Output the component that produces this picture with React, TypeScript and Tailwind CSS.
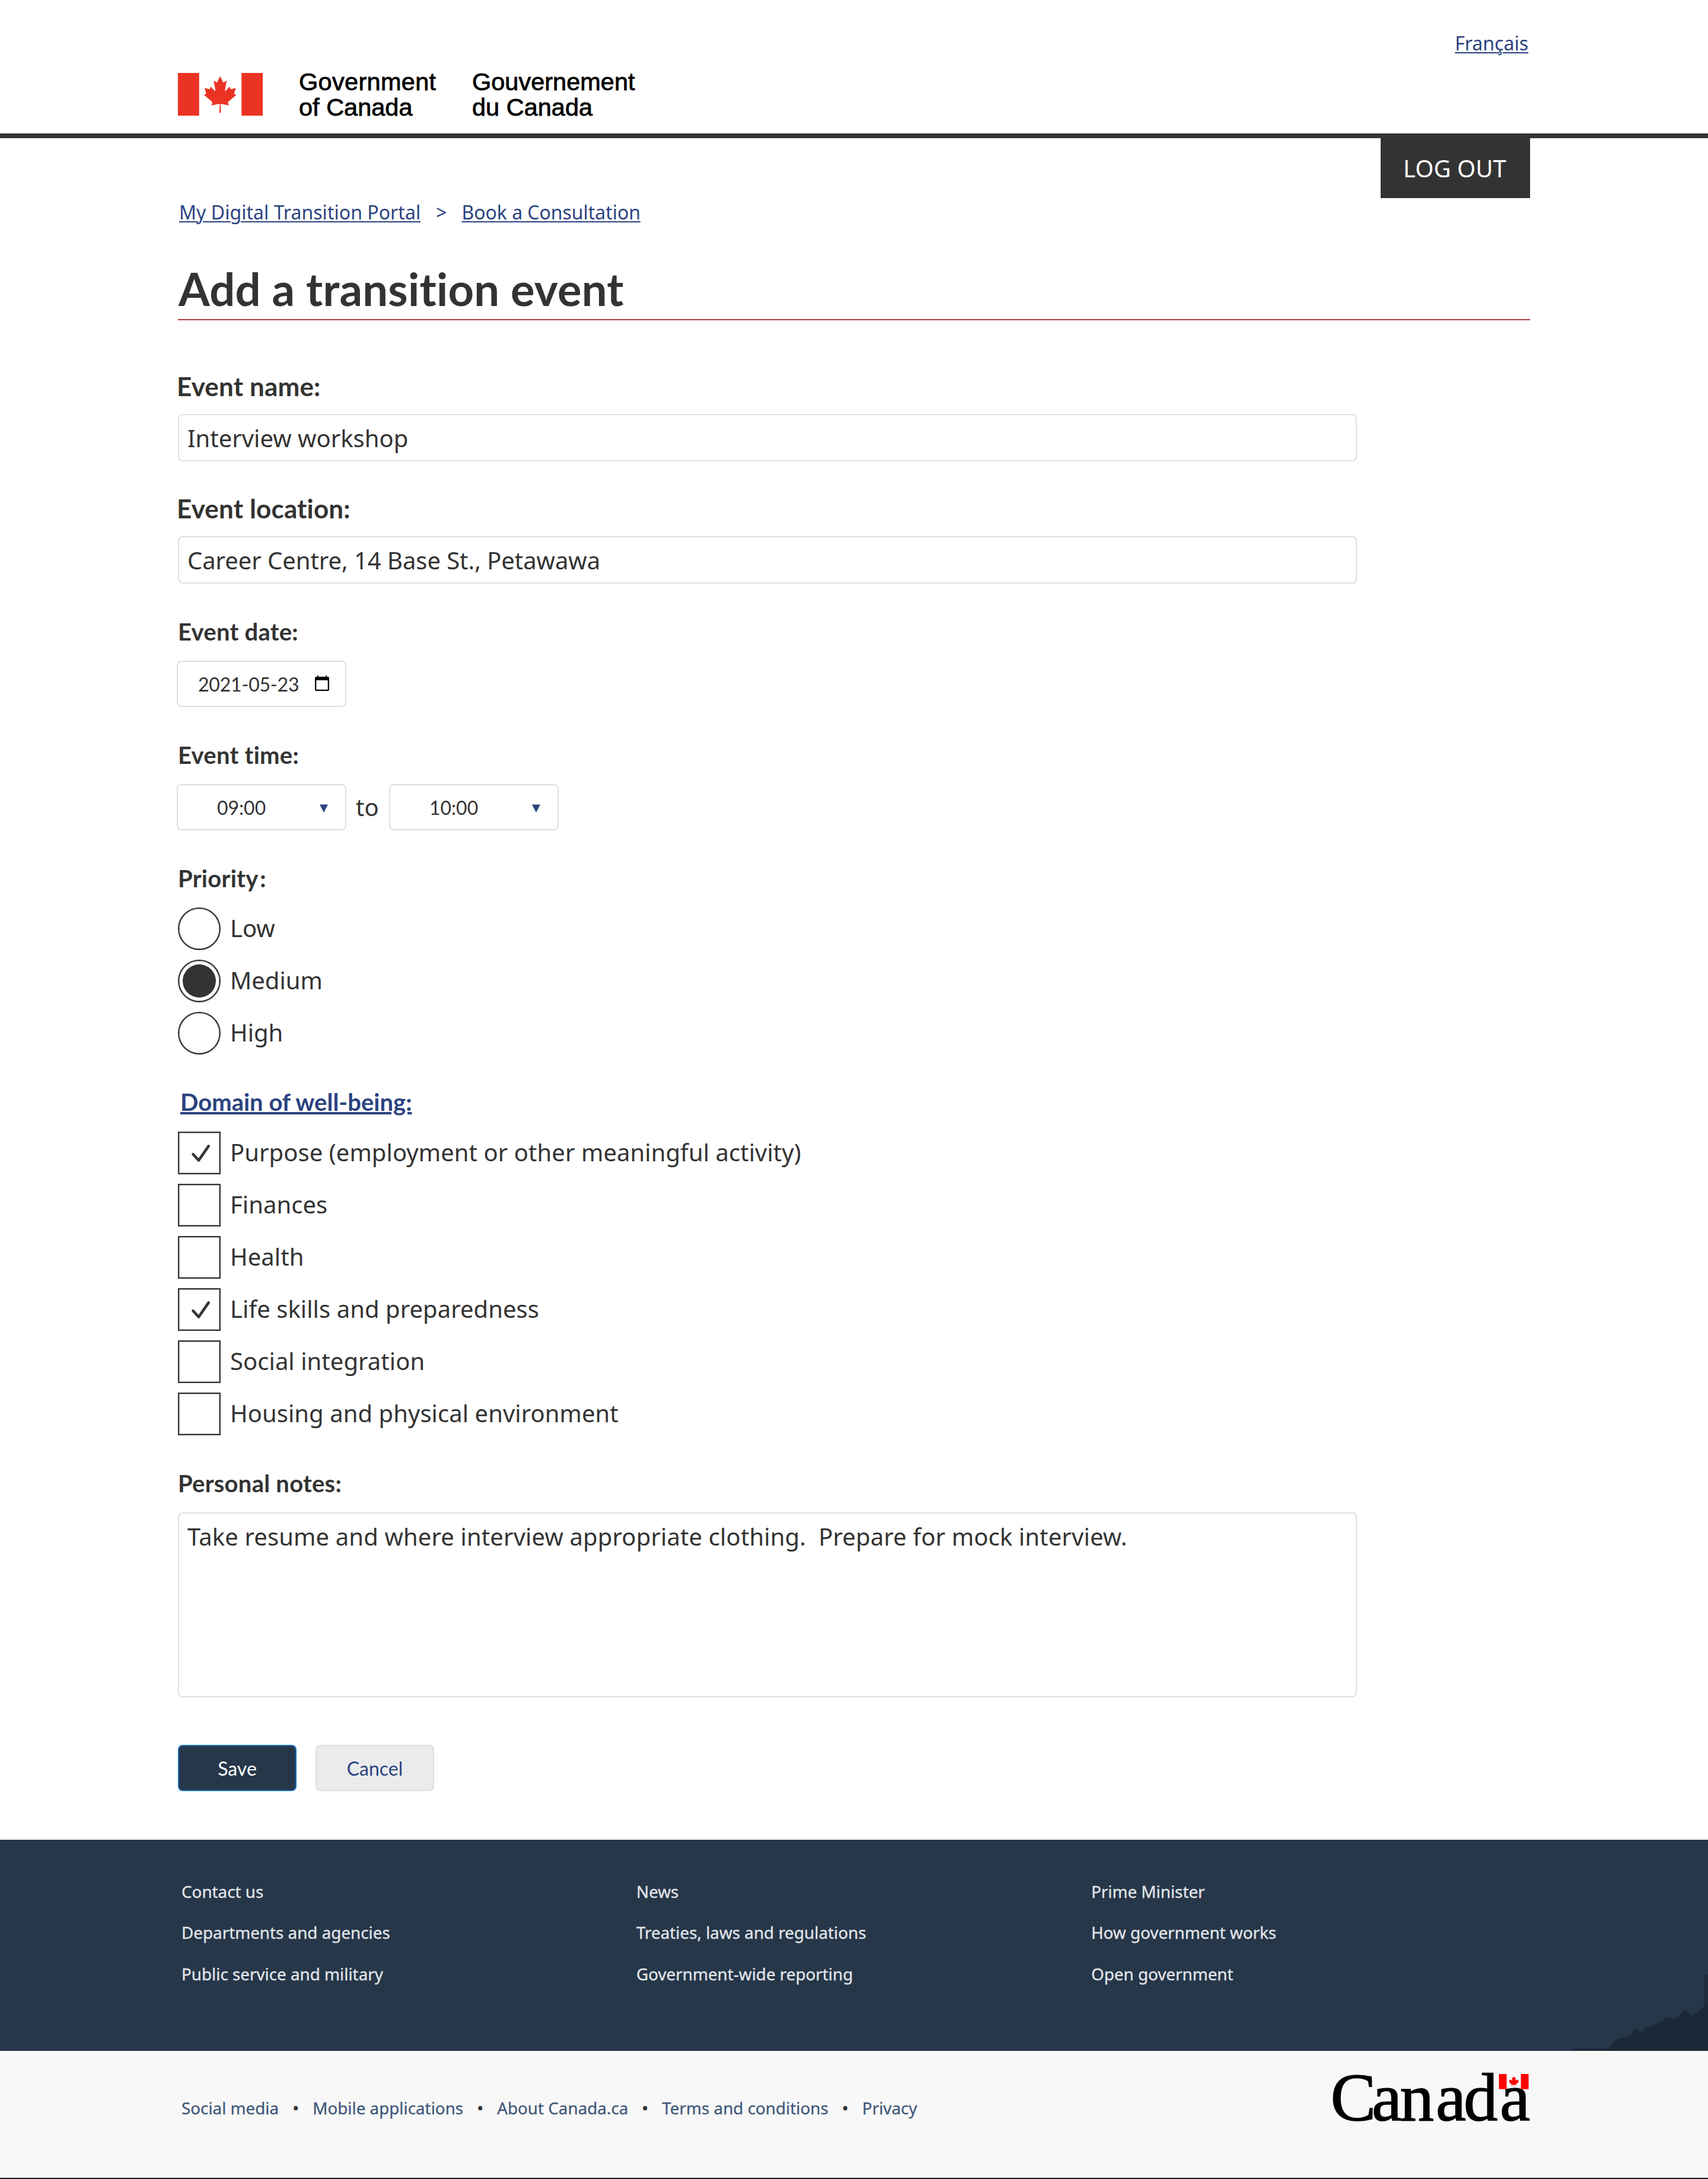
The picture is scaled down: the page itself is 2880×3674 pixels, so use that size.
import type { ReactNode } from "react";

const noto = "font-['Noto_Sans',sans-serif]";
const lato = "font-['Lato',sans-serif] [font-variant-ligatures:none]";

const LEAF =
  "m4890 4430-45-863a95 95 0 0 1 111-98l859 151-116-320a65 65 0 0 1 20-73l941-762-212-99a65 65 0 0 1-34-79l186-572-542 115a65 65 0 0 1-73-38l-105-247-423 454a65 65 0 0 1-111-57l204-1052-327 189a65 65 0 0 1-91-27l-332-652-332 652a65 65 0 0 1-91 27l-327-189 204 1052a65 65 0 0 1-111 57l-423-454-105 247a65 65 0 0 1-73 38l-542-115 186 572a65 65 0 0 1-34 79l-212 99 941 762a65 65 0 0 1 20 73l-116 320 859-151a95 95 0 0 1 111 98l-45 863z";

function Leaf(props: { x: number; y: number; width: number; height: number }) {
  return (
    <svg {...props} viewBox="2940 400 3720 4030" preserveAspectRatio="none">
      <path d={LEAF} />
    </svg>
  );
}

function Flag() {
  return (
    <svg className="h-[72px] w-[143px] shrink-0" viewBox="0 0 143 72" fill="#eb3323">
      <rect width="35.8" height="72" />
      <rect x="107.2" width="35.8" height="72" />
      <Leaf x={44} y={5.5} width={54.5} height={61.5} />
    </svg>
  );
}

function Wordmark() {
  return (
    <svg className="h-[140px] w-[348px] shrink-0" viewBox="-4 -26 348 140" role="img" aria-label="Canada">
      <text
        className="font-['Liberation_Serif',serif] text-[115px]"
        x="0.5 70 117.5 178 225 286"
        y="81"
        fill="#000"
        stroke="#000"
        strokeWidth="1.5"
      >
        Canada
      </text>
      <g fill="#ff0000">
        <rect x="284.5" y="3" width="13" height="25.5" />
        <rect x="321.5" y="3" width="13" height="25.5" />
        <Leaf x={301} y={6.5} width={17} height={19} />
      </g>
    </svg>
  );
}

function Label({ children, large }: { children: ReactNode; large?: boolean }) {
  return large ? (
    <div className={`${lato} -ml-[2px] text-[44px] leading-[52px] font-bold tracking-[0.15px]`}>{children}</div>
  ) : (
    <div className={`${lato} pt-[2px] text-[40px] leading-[46px] font-bold tracking-[0.25px]`}>{children}</div>
  );
}

function TextInput({ children }: { children: ReactNode }) {
  return (
    <div className="mt-[21px] flex h-20 w-[1988px] items-center rounded-lg border-2 border-[#dcdee1] pt-[2px] pl-[14px] text-[40px] leading-[54px]">
      {children}
    </div>
  );
}

function TimeSelect({ value }: { value: string }) {
  return (
    <div
      className={`${lato} flex h-[78px] w-[286px] items-center justify-between rounded-lg border-2 border-[#dcdee1] pr-[29px] pl-[66px] text-[32px] leading-[40px]`}
    >
      <span className="pt-[2px]">{value}</span>
      <svg className="mt-[4px] h-[14px] w-[14px]" viewBox="0 0 14 14">
        <path d="M0 .5h14L7 14z" fill="#2b4380" />
      </svg>
    </div>
  );
}

function Radio({ label, checked }: { label: string; checked?: boolean }) {
  return (
    <div className="flex h-[72px] items-center gap-4">
      <div className="flex size-[72px] items-center justify-center rounded-full border-[2px] border-[#333] shadow-[inset_0_0_0_0.5px_#333]">
        {checked && <div className="size-14 rounded-full bg-[#333]" />}
      </div>
      <span className="-mt-[2px] text-[40px] leading-[54px]">{label}</span>
    </div>
  );
}

function Checkbox({ label, checked }: { label: string; checked?: boolean }) {
  return (
    <div className="flex h-[72px] items-center gap-4">
      <div className="size-[72px] border-2 border-[#333] shadow-[inset_0_0_0_1px_#adadad]">
        {checked && (
          <svg className="size-[68px]" viewBox="2 2 68 68" fill="none" stroke="#333" strokeWidth="4.6" strokeLinecap="round" strokeLinejoin="round">
            <path d="M25.6 38.2 35 48.5 51.7 24.4" />
          </svg>
        )}
      </div>
      <span className="-mt-[2px] text-[40px] leading-[54px] tracking-[0.05px]">{label}</span>
    </div>
  );
}

const footerColumns = [
  ["Contact us", "Departments and agencies", "Public service and military"],
  ["News", "Treaties, laws and regulations", "Government-wide reporting"],
  ["Prime Minister", "How government works", "Open government"],
];

const footerLinks = ["Social media", "Mobile applications", "About Canada.ca", "Terms and conditions", "Privacy"];

const link = "text-[#2b4380] underline decoration-2 underline-offset-[3px]";

export default function App() {
  return (
    <div className={`${noto} flex h-[3674px] w-[2880px] flex-col bg-white text-[#333]`}>
      <header className="flex h-[233px] shrink-0 justify-between border-b-8 border-[#333] px-[300px]">
        <div className="flex pt-[123px]">
          <Flag />
          <div className="-mt-[6px] ml-[61px] flex font-['Liberation_Sans',sans-serif] text-[41.5px] leading-[42.5px] text-black [-webkit-text-stroke:0.8px_black]">
            <div className="w-[292px]">
              <span className="tracking-[0.3px]">Government</span>
              <br />
              of Canada
            </div>
            <div>
              Gouvernement
              <br />
              du Canada
            </div>
          </div>
        </div>
        <a className={`${link} mt-[53px] mr-[3px] h-10 text-[32px] leading-[40px]`}>Français</a>
      </header>

      <main className="flex flex-col px-[300px]">
        <button className="h-[101px] w-[252px] self-end bg-[#333] pt-[21px] pb-[20px] pl-[38px] text-left text-[40px] leading-[60px] text-white">
          LOG OUT
        </button>
        <nav className="mt-1 ml-[2px] flex gap-[26px] text-[32px] leading-[40px] text-[#2b4380]">
          <a className={`${link} tracking-[0.03px]`}>My Digital Transition Portal</a>
          <span>&gt;</span>
          <a className={`${link} -ml-px tracking-[-0.05px]`}>Book a Consultation</a>
        </nav>

        <h1 className={`${lato} mt-[63px] h-[99px] border-b-2 border-[#af3c43] pl-px text-[76px] leading-[92px] font-bold tracking-[0.2px]`}>
          Add a transition event
        </h1>

        <div className="mt-[85px]">
          <Label large>Event name:</Label>
          <TextInput>Interview workshop</TextInput>
        </div>
        <div className="mt-[53px]">
          <Label large>Event location:</Label>
          <TextInput>
            <span className="tracking-[-0.06px]">Career Centre, 14 Base St., Petawawa</span>
          </TextInput>
        </div>

        <div className="mt-14">
          <Label>Event date:</Label>
          <div
            className={`${lato} mt-[26px] -ml-[2px] flex h-[78px] w-[286px] items-center justify-between rounded-lg border-2 border-[#dcdee1] pr-[27px] pl-[34px] text-[32px] leading-[40px]`}
          >
            <span className="pt-[2px] tracking-[-0.2px]">2021-05-23</span>
            <svg className="mb-[2px] h-[26px] w-[24px]" viewBox="0 0 24 26">
              <path d="M4 0h2v2h12V0h2v2h1.500a2.500 2.500 0 0 1 2.500 2.500v19a2.500 2.500 0 0 1-2.500 2.500h-19A2.500 2.500 0 0 1 0 23.500v-19A2.500 2.500 0 0 1 2.500 2H4zM2.300 8v15.700h19.400V8z" fill="#000" fillRule="evenodd" />
            </svg>
          </div>
        </div>

        <div className="mt-14">
          <Label>Event time:</Label>
          <div className="mt-[26px] -ml-[2px] flex">
            <TimeSelect value="09:00" />
            <span className="h-[78px] w-[72px] pl-4 text-[40px] leading-[78px]">to</span>
            <TimeSelect value="10:00" />
          </div>
        </div>

        <div className="mt-14">
          <Label>
            Priorit<span className="tracking-[3px]">y</span>:
          </Label>
          <div className="mt-[26px] flex flex-col gap-4">
            <Radio label="Low" />
            <Radio label="Medium" checked />
            <Radio label="High" />
          </div>
        </div>

        <div className="mt-14">
          <div className={`${lato} ml-1 pt-px text-[40px] leading-[47px] font-bold text-[#2b4380] underline decoration-4 underline-offset-2`}>
            Domain of well-being:
          </div>
          <div className="mt-[26px] flex flex-col gap-4">
            <Checkbox label="Purpose (employment or other meaningful activity)" checked />
            <Checkbox label="Finances" />
            <Checkbox label="Health" />
            <Checkbox label="Life skills and preparedness" checked />
            <Checkbox label="Social integration" />
            <Checkbox label="Housing and physical environment" />
          </div>
        </div>

        <div className="mt-14">
          <Label>Personal notes:</Label>
          <div className="mt-[26px] h-[312px] w-[1988px] rounded-lg border-2 border-[#dcdee1] pt-[12px] pl-[14px] text-[40px] leading-[54px] tracking-[0.12px] whitespace-pre">
            {"Take resume and where interview appropriate clothing.  Prepare for mock interview."}
          </div>
        </div>

        <div className={`${lato} mt-20 flex gap-8 text-[32px] leading-[40px]`}>
          <button className="h-[78px] w-[200px] rounded-lg border-2 border-[#1c70b8] bg-[#26374a] pt-[2px] text-white">Save</button>
          <button className="h-[78px] w-[200px] rounded-lg border-2 border-[#dcdee1] bg-[#eaebed] pt-[2px] text-[#2b4380]">Cancel</button>
        </div>
      </main>

      <footer className="mt-[82px] flex grow flex-col">
        <div className="relative h-[356px] bg-[#26374a] pt-[52.5px] pl-[306px]">
          <div className="grid grid-cols-[767px_767px_767px] text-[27.8px] leading-[69.6px] text-[#e4e6e9] [-webkit-text-stroke:0.3px_#e4e6e9]">
            {footerColumns.map((items) => (
              <div key={items[0]}>
                {items.map((item) => (
                  <div key={item}>{item}</div>
                ))}
              </div>
            ))}
          </div>
          <svg className="absolute right-0 bottom-0 h-[128px] w-[229px]" viewBox="0 0 229 128" fill="#1b2838">
            <path d="M0 124h61l6-6 7-10 21-5 5-4 4-7 6-1 5 6 9-9 8 1 11-9 8-1 7-8 11 3 10-1 5-9 6-6 5 4 4 7 11-6 13-11h6v76H0z" />
            <rect x="223" width="6" height="54" opacity=".7" />
          </svg>
        </div>
        <div className="flex h-[214px] justify-between bg-[#f8f8f8] pr-[293px] pl-[306px]">
          <div className="flex gap-[23.3px] pt-[76px] text-[27.8px] leading-[40px] text-[#3f587a]">
            {footerLinks.map((item, i) => (
              <div key={item} className="flex gap-[23.3px]">
                {i > 0 && <span className="text-[#333] [-webkit-text-stroke:0.8px_#333]">•</span>}
                <span className="[-webkit-text-stroke:0.3px_#3f587a]">{item}</span>
              </div>
            ))}
          </div>
          <div className="mt-[10px]">
            <Wordmark />
          </div>
        </div>
        <div className="h-[2px] bg-[#0d1d2b]" />
      </footer>
    </div>
  );
}
